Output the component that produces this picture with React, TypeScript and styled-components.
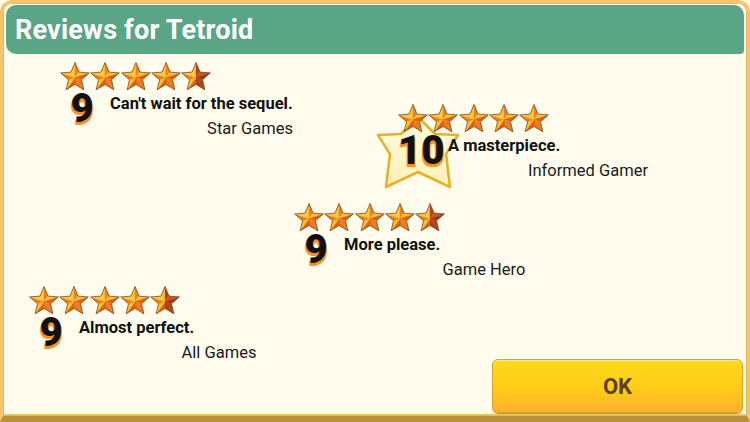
import React from "react";
import styled, { createGlobalStyle } from "styled-components";

const Global = createGlobalStyle`
  html, body { margin: 0; padding: 0; background: #fffcee; }
  body { font-family: Roboto, "Noto Sans", Arial, sans-serif; }
`;

const Frame = styled.div`
  width: 750px;
  height: 422px;
  box-sizing: border-box;
  border: 3px solid #f3c66c;
  border-bottom: 6px solid #b8913a;
  border-radius: 12px 12px 0 0;
  background: #fffcee;
  box-shadow: inset 0 0 0 1px #e2b957, inset 0 -2px 0 #eec468;
  display: flex;
  flex-direction: column;
  overflow: hidden;
`;

const Header = styled.header`
  margin: 2px 3px 0;
  height: 49px;
  flex: none;
  border-radius: 10px 10px 4px 10px;
  background: #5aa586;
  display: flex;
  align-items: center;
  padding-left: 9px;
`;

const Title = styled.h1`
  margin: 0;
  color: #ffffff;
  font-family: Roboto, "Noto Sans", sans-serif;
  font-weight: 700;
  font-size: 27px;
  letter-spacing: 0.2px;
`;

const Board = styled.main`
  flex: 1;
  position: relative;
`;

const Footer = styled.footer`
  flex: none;
  display: flex;
  justify-content: flex-end;
  padding: 0 4px 3px 0;
`;

const OkButton = styled.button`
  width: 251px;
  height: 54px;
  border: 1px solid #d7a42c;
  border-radius: 6px;
  background: linear-gradient(#ffdb1e 0%, #ffcc18 55%, #fbb12c 100%);
  box-shadow: inset 0 1px 0 #ffe97a, 0 1px 0 #c99a34;
  color: #5e3f0e;
  font-family: Roboto, "Noto Sans", sans-serif;
  font-weight: 700;
  font-size: 22px;
  padding: 0;
  cursor: pointer;
`;

const Card = styled.section<{ $x: number; $y: number }>`
  position: absolute;
  left: ${(p) => p.$x}px;
  top: ${(p) => p.$y}px;
`;

const StarsRow = styled.div`
  position: relative;
  z-index: 2;
  display: flex;
  height: 28px;
  gap: 0.3px;
`;

const Body = styled.div`
  display: grid;
  grid-template-columns: 44px 280px;
  column-gap: 6px;
  position: relative;
  z-index: 1;
`;

const Score = styled.div`
  grid-row: 1 / span 2;
  text-align: center;
  font-family: Roboto, "Noto Sans", sans-serif;
  font-weight: 900;
  font-size: 40px;
  line-height: 1;
  margin-top: -1px;
  color: #111;
  text-shadow: -1px 3px 0 #f5922a, 1px 3px 0 #f5922a;
  position: relative;
`;

const Quote = styled.div`
  margin-top: 4px;
  font-family: Roboto, "Noto Sans", sans-serif;
  font-weight: 700;
  font-size: 16.5px;
  line-height: 20px;
  color: #111;
  white-space: nowrap;
`;

const Author = styled.div`
  margin-top: 5px;
  text-align: center;
  font-family: Roboto, "Noto Sans", sans-serif;
  font-weight: 400;
  font-size: 16.5px;
  line-height: 20px;
  color: #1a1a1a;
  white-space: nowrap;
`;

const BigStar = styled.svg`
  position: absolute;
  left: -23px;
  top: -4px;
  z-index: 0;
  pointer-events: none;
`;

type RGB = [number, number, number];
const lerp = (a: RGB, b: RGB, t: number): string =>
  `rgb(${a.map((v, i) => Math.round(v + (b[i] - v) * t)).join(",")})`;
const shade = (dark: RGB, mid: RGB, light: RGB, t: number) =>
  t < 0.5 ? lerp(dark, mid, t * 2) : lerp(mid, light, (t - 0.5) * 2);

const FULL: [RGB, RGB, RGB] = [[222, 96, 18], [243, 138, 30], [255, 208, 58]];
const DARK: [RGB, RGB, RGB] = [[156, 56, 20], [180, 70, 24], [206, 92, 34]];

const Star: React.FC<{ half?: boolean }> = ({ half }) => {
  const cx = 15, cy = 15.6, R = 15, r = 6.8;
  const pt = (deg: number, rad: number): [number, number] => {
    const a = (deg * Math.PI) / 180;
    return [cx + rad * Math.cos(a), cy + rad * Math.sin(a)];
  };
  const outer = [0, 1, 2, 3, 4].map((i) => pt(-90 + 72 * i, R));
  const inner = [0, 1, 2, 3, 4].map((i) => pt(-54 + 72 * i, r));
  const L = [-0.55, -0.83];
  const facets: { pts: [number, number][]; fill: string }[] = [];
  for (let i = 0; i < 5; i++) {
    const o = outer[i];
    const tris: [number, number][][] = [
      [[cx, cy], inner[(i + 4) % 5], o],
      [[cx, cy], o, inner[i]],
    ];
    tris.forEach((t) => {
      const [a, b] = [t[1], t[2]];
      let nx = -(b[1] - a[1]);
      let ny = b[0] - a[0];
      const mx = (a[0] + b[0]) / 2 - cx;
      const my = (a[1] + b[1]) / 2 - cy;
      if (nx * mx + ny * my < 0) { nx = -nx; ny = -ny; }
      const len = Math.hypot(nx, ny);
      const d = (nx * L[0] + ny * L[1]) / len;
      const centroidX = (t[0][0] + t[1][0] + t[2][0]) / 3;
      const pal = half && centroidX > cx + 0.01 ? DARK : FULL;
      facets.push({ pts: t, fill: shade(pal[0], pal[1], pal[2], (d + 1) / 2) });
    });
  }
  const outline: string[] = [];
  for (let i = 0; i < 5; i++) {
    outline.push(outer[i].join(","), inner[i].join(","));
  }
  return (
    <svg width="30" height="28" viewBox="0 0 30 28">
      {facets.map((f, k) => (
        <polygon key={k} points={f.pts.map((p) => p.join(",")).join(" ")} fill={f.fill} stroke={f.fill} strokeWidth="0.3" />
      ))}
      <polygon points={outline.join(" ")} fill="none" stroke="#71502e" strokeWidth="0.8" strokeLinejoin="round" />
    </svg>
  );
};

type Review = { x: number; y: number; score: number; quote: string; author: string };

const reviews: Review[] = [
  { x: 57, y: 8, score: 9, quote: "Can't wait for the sequel.", author: "Star Games" },
  { x: 395, y: 50, score: 10, quote: "A masterpiece.", author: "Informed Gamer" },
  { x: 291, y: 149, score: 9, quote: "More please.", author: "Game Hero" },
  { x: 26, y: 232, score: 9, quote: "Almost perfect.", author: "All Games" },
];

const ReviewCard: React.FC<{ r: Review }> = ({ r }) => (
  <Card $x={r.x} $y={r.y}>
    {r.score === 10 && (
      <BigStar width="88" height="92" viewBox="0 0 88 92">
        <defs>
          <linearGradient id="bigfill" x1="0" y1="0" x2="0" y2="1">
            <stop offset="0" stopColor="#fffbe4" />
            <stop offset="1" stopColor="#fff0b4" />
          </linearGradient>
        </defs>
        <polygon
          points="43,17 60,34 83,35 71,54 75,87 43,72 11,87 15,54 3,35 26,34"
          fill="url(#bigfill)"
          stroke="#e7b22a"
          strokeWidth="2.6"
          strokeLinejoin="round"
        />
        <polygon
          points="43,20 59,37 79,38 68,55 72,83 43,69 14,83 18,55 7,38 27,37"
          fill="none"
          stroke="#fff7cf"
          strokeWidth="1"
          strokeLinejoin="round"
        />
      </BigStar>
    )}
    <StarsRow>
      {[0, 1, 2, 3, 4].map((i) => (
        <Star key={i} half={r.score < 10 && i === 4} />
      ))}
    </StarsRow>
    <Body>
      <Score>{r.score}</Score>
      <Quote>{r.quote}</Quote>
      <Author>{r.author}</Author>
    </Body>
  </Card>
);

export default function App() {
  return (
    <>
      <Global />
      <Frame>
        <Header>
          <Title>Reviews for Tetroid</Title>
        </Header>
        <Board>
          {reviews.map((r) => (
            <ReviewCard key={r.author} r={r} />
          ))}
        </Board>
        <Footer>
          <OkButton>OK</OkButton>
        </Footer>
      </Frame>
    </>
  );
}
